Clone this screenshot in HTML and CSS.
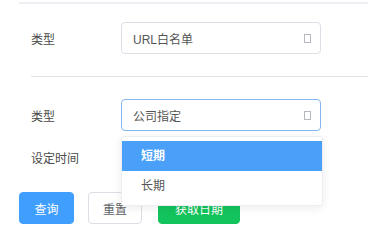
FILE: index.html
```html
<!DOCTYPE html>
<html lang="zh-CN">
<head>
<meta charset="utf-8">
<title>表单</title>
<link rel="stylesheet" href="styles.css">
</head>
<body>
<div class="page">
  <div class="panel">
    <div class="form">
      <div class="row">
        <div class="label">类型</div>
        <div class="select"><span class="value">URL白名单</span><span class="icon"></span></div>
      </div>
      <div class="divider"></div>
      <div class="row">
        <div class="label">类型</div>
        <div class="select-wrap">
          <div class="select focus"><span class="value">公司指定</span><span class="icon"></span></div>
          <ul class="dropdown">
            <li class="option active">短期</li>
            <li class="option">长期</li>
          </ul>
        </div>
      </div>
      <div class="row row-gap">
        <div class="label">设定时间</div>
        <div class="select"><span class="value"></span><span class="icon"></span></div>
      </div>
    </div>
    <div class="buttons">
      <button class="btn btn-primary">查询</button>
      <button class="btn btn-default">重置</button>
      <button class="btn btn-success">获取日期</button>
    </div>
  </div>
</div>
</body>
</html>
```
FILE: styles.css
```css
html, body {
  margin: 0;
  padding: 0;
  background: #ffffff;
}
body {
  font-family: "Liberation Sans", "Noto Sans CJK SC", sans-serif;
  font-size: 12px;
  color: #4a4a4a;
  overflow: hidden;
}
.page {
  padding: 2px 0 0 19px;
}
.panel {
  border-top: 2px solid #efeef5;
  padding-top: 18px;
}
.form {
  padding-left: 12px;
}
.row {
  display: flex;
  align-items: center;
  height: 32px;
}
.row-gap {
  margin-top: 10px;
}
.label {
  width: 90px;
  color: #4a4a4a;
}
.select-wrap {
  position: relative;
  width: 200px;
  height: 32px;
}
.select {
  width: 200px;
  height: 32px;
  box-sizing: border-box;
  border: 1px solid #dcdfe6;
  border-radius: 4px;
  display: flex;
  align-items: center;
  justify-content: space-between;
  padding: 0 9px 0 11px;
  color: #555555;
  background: #ffffff;
}
.select.focus {
  border-color: #84b7f2;
}
.icon {
  width: 5px;
  height: 7px;
  border: 1px solid #b5b8be;
}
.divider {
  height: 1px;
  background: #e0e2e8;
  margin: 22px 0;
}
.dropdown {
  position: absolute;
  left: 0;
  top: 37px;
  width: 200px;
  margin: 0;
  padding: 4px 0 4px;
  list-style: none;
  background: #ffffff;
  border: 1px solid #eceef3;
  border-radius: 3px;
  box-shadow: 0 2px 10px rgba(0, 0, 0, 0.08);
  z-index: 10;
}
.option {
  height: 30px;
  line-height: 30px;
  padding-left: 19px;
  color: #555555;
}
.option.active {
  background: #4a9ff9;
  color: #ffffff;
  font-weight: bold;
}
.buttons {
  display: flex;
  margin-top: 19px;
}
.btn {
  height: 32px;
  box-sizing: border-box;
  border-radius: 4px;
  font-family: "Liberation Sans", "Noto Sans CJK SC", sans-serif;
  font-size: 12px;
  padding: 0;
  border: 1px solid transparent;
  margin: 0;
}
.btn-primary {
  width: 55px;
  background: #409eff;
  border-color: #409eff;
  color: #ffffff;
}
.btn-default {
  width: 54px;
  margin-left: 14px;
  background: #ffffff;
  border-color: #dcdfe6;
  color: #606266;
}
.btn-success {
  width: 82px;
  margin-left: 16px;
  background: #13c45c;
  border-color: #13c45c;
  color: #ffffff;
}
```
